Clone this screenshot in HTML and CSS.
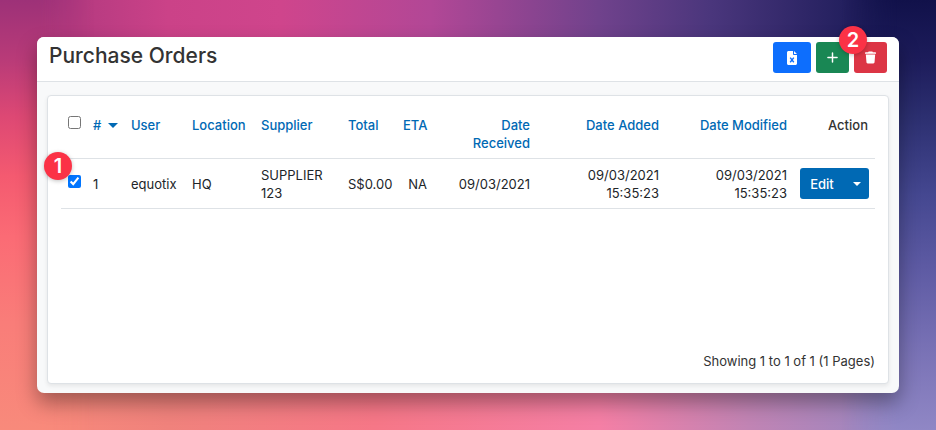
FILE: index.html
```html
<!DOCTYPE html>
<html lang="en">
<head>
    <meta charset="UTF-8">
    <meta name="viewport" content="width=device-width, initial-scale=1.0">
    <title>Purchase Orders</title>
    <!-- Styles -->
    <link rel="stylesheet" href="styles.css">
</head>
<body>
    <main class="window">
        <header class="page-header">
            <h1>Purchase Orders</h1>
            <div class="toolbar">
                <button type="button" class="btn btn-export" aria-label="Export to Excel">
                    <svg width="10" height="14" viewBox="0 0 10 14">
                        <path fill="#fff" d="M1.5 0H6v3.2c0 .5.3.8.8.8H10v8.5c0 .8-.7 1.5-1.5 1.5h-7C.7 14 0 13.3 0 12.5v-11C0 .7.7 0 1.5 0zM7 0l3 3H7z"/>
                        <path fill="none" stroke="#0d6efd" stroke-width="1.4" d="M3.2 6.6l3.6 4.6M6.8 6.6l-3.6 4.6"/>
                    </svg>
                </button>
                <button type="button" class="btn btn-add" aria-label="Add new">
                    <svg width="11" height="11" viewBox="0 0 12 12">
                        <path fill="none" stroke="#fff" stroke-width="1.6" stroke-linecap="round" d="M6 1v10M1 6h10"/>
                    </svg>
                </button>
                <button type="button" class="btn btn-delete" aria-label="Delete">
                    <svg width="11" height="13" viewBox="0 0 12 13">
                        <path fill="#fff" d="M4 0h4l.6.9h2.7c.4 0 .7.3.7.6v.9H0v-.9c0-.3.3-.6.7-.6h2.7zM.9 3.2h10.2l-.7 8.6c-.1.7-.6 1.2-1.3 1.2H2.9c-.7 0-1.2-.5-1.3-1.2z"/>
                    </svg>
                    <span class="step step-delete">2</span>
                </button>
            </div>
        </header>

        <section class="panel">
            <table class="orders">
                <colgroup>
                    <col class="col-check">
                    <col class="col-id">
                    <col class="col-user">
                    <col class="col-location">
                    <col class="col-supplier">
                    <col class="col-total">
                    <col class="col-eta">
                    <col class="col-received">
                    <col class="col-added">
                    <col class="col-modified">
                    <col class="col-action">
                </colgroup>
                <thead>
                    <tr>
                        <th><input type="checkbox" aria-label="Select all"></th>
                        <th><a href="#" class="sorted">#</a></th>
                        <th><a href="#">User</a></th>
                        <th><a href="#">Location</a></th>
                        <th><a href="#">Supplier</a></th>
                        <th><a href="#">Total</a></th>
                        <th class="right"><a href="#">ETA</a></th>
                        <th class="right received"><a href="#">Date Received</a></th>
                        <th class="right"><a href="#">Date Added</a></th>
                        <th class="right"><a href="#">Date Modified</a></th>
                        <th class="right">Action</th>
                    </tr>
                </thead>
                <tbody>
                    <tr>
                        <td class="check">
                            <input type="checkbox" aria-label="Select order 1" checked>
                            <span class="step step-select">1</span>
                        </td>
                        <td>1</td>
                        <td>equotix</td>
                        <td>HQ</td>
                        <td class="wrap">SUPPLIER 123</td>
                        <td>S$0.00</td>
                        <td class="right">NA</td>
                        <td class="right">09/03/2021</td>
                        <td class="right wrap">09/03/2021 15:35:23</td>
                        <td class="right wrap">09/03/2021 15:35:23</td>
                        <td class="action">
                            <div class="btn-group">
                                <button type="button" class="btn btn-edit">Edit</button>
                                <button type="button" class="btn btn-toggle" aria-label="More actions"></button>
                            </div>
                        </td>
                    </tr>
                </tbody>
            </table>
            <p class="results">Showing 1 to 1 of 1 (1 Pages)</p>
        </section>
    </main>
</body>
</html>
```
FILE: styles.css
```css
* {
    box-sizing: border-box;
}

body {
    margin: 0;
    padding: 37px;
    min-height: 100vh;
    display: flex;
    font-family: 'Inter', sans-serif;
    font-size: 13px;
    line-height: 18px;
    color: #212529;
    background:
        linear-gradient(90deg, #a3347a 0%, #cb4288 18%, #cf458c 30%, #b24796 46%, #70428c 64%, #4a367c 76%, #24205f 90%, #10114a 100%) top / 100% 50% no-repeat,
        linear-gradient(90deg, #fa8b7a 0%, #f0827c 18%, #f67787 40%, #f57fa5 64%, #c184b4 80%, #8d87c4 100%) bottom / 100% 50% no-repeat;
}

/* Side colours of the backdrop */
body::before,
body::after {
    content: "";
    position: absolute;
    z-index: -1;
    top: 0;
    bottom: 0;
    width: 10%;
}

body::before {
    left: 0;
    background: linear-gradient(#9d3178 0%, #b93b78 14%, #dd4874 27%, #f45a70 41%, #fb6b75 55%, #f97d79 75%, #f88a7b 100%);
    -webkit-mask-image: linear-gradient(90deg, #000 40%, transparent);
    mask-image: linear-gradient(90deg, #000 40%, transparent);
}

body::after {
    right: 0;
    background: linear-gradient(#11114a 0%, #1d1c5b 14%, #2c2f70 27%, #444790 45%, #5d5aa3 62%, #7770b4 80%, #9087c5 100%);
    -webkit-mask-image: linear-gradient(270deg, #000 40%, transparent);
    mask-image: linear-gradient(270deg, #000 40%, transparent);
}

/* Window */
.window {
    flex: 1;
    display: flex;
    flex-direction: column;
    background-color: #f8f9fa;
    border-radius: 7px;
    box-shadow: 0 10px 20px rgba(0, 0, 0, 0.35);
}

.page-header {
    display: flex;
    justify-content: space-between;
    padding: 5px 12px 8px;
    background-color: #fff;
    border-bottom: 1px solid #dee2e6;
    border-radius: 7px 7px 0 0;
}

h1 {
    margin: 0;
    font-size: 21px;
    font-weight: 500;
    line-height: 28px;
    color: #333;
}

.toolbar {
    display: flex;
    gap: 5px;
}

/* Buttons */
.btn {
    display: flex;
    align-items: center;
    justify-content: center;
    position: relative;
    height: 31px;
    width: 33px;
    padding: 0;
    border: 0;
    border-radius: 3px;
    font: inherit;
    color: #fff;
    cursor: pointer;
}

.btn-export {
    width: 38px;
    background-color: #0d6efd;
}

.btn-add {
    background-color: #198754;
}

.btn-delete {
    background-color: #dc3545;
}

.btn-group {
    display: flex;
    justify-content: flex-end;
}

.btn-edit,
.btn-toggle {
    background-color: #0069b4;
}

.btn-edit {
    width: 44px;
    font-weight: 500;
    border-radius: 3px 0 0 3px;
}

.btn-toggle {
    width: 25px;
    border-radius: 0 3px 3px 0;
}

.btn-toggle::after {
    content: "";
    border-top: 4px solid #fff;
    border-left: 4px solid transparent;
    border-right: 4px solid transparent;
}

/* Panel */
.panel {
    flex: 1;
    display: flex;
    flex-direction: column;
    justify-content: space-between;
    margin: 13px 10px 9px;
    padding: 13px;
    background-color: #fff;
    border: 1px solid #dee2e6;
    border-radius: 4px;
    box-shadow: 0 2px 4px rgba(0, 0, 0, 0.08);
}

.orders {
    width: 100%;
    table-layout: fixed;
    border-spacing: 0;
}

.col-check { width: 26px; }
.col-id { width: 38px; }
.col-user { width: 61px; }
.col-location { width: 69px; }
.col-supplier { width: 87px; }
.col-total { width: 55px; }
.col-eta { width: 37px; }
.col-received { width: 103px; }
.col-added { width: 129px; }
.col-modified { width: 128px; }
.col-action { width: 81px; }

th,
td {
    padding: 7px 7px 6px 6px;
    border-bottom: 1px solid #dee2e6;
    text-align: left;
    white-space: nowrap;
}

th:first-child,
td:first-child {
    padding-left: 7px;
}

th {
    font-weight: 500;
    vertical-align: top;
    color: #333;
}

th a {
    color: #0069b4;
    text-decoration: none;
    white-space: normal;
}

th.received {
    padding-left: 24px;
}

td {
    vertical-align: middle;
}

td.wrap {
    white-space: normal;
}

.right {
    text-align: right;
}

.sorted {
    display: flex;
    align-items: center;
    gap: 7px;
}

.sorted::after {
    content: "";
    border-top: 5px solid #0069b4;
    border-left: 5px solid transparent;
    border-right: 5px solid transparent;
}

input[type="checkbox"] {
    display: block;
    width: 13px;
    height: 13px;
    margin: 0 0 6px;
}

.check {
    position: relative;
}

.action {
    padding: 0 6px 0 0;
}

/* Step markers */
.step {
    position: absolute;
    display: flex;
    align-items: center;
    justify-content: center;
    width: 28px;
    height: 28px;
    border-radius: 50%;
    background-color: #fb3246;
    box-shadow: 0 1px 4px rgba(0, 0, 0, 0.25);
    color: #fff;
    font-size: 20px;
    font-weight: 600;
}

.step-select {
    top: -7px;
    left: -17px;
}

.step-delete {
    top: -16px;
    left: -15px;
}

.results {
    margin: 0;
    text-align: right;
    color: #333;
}
```
